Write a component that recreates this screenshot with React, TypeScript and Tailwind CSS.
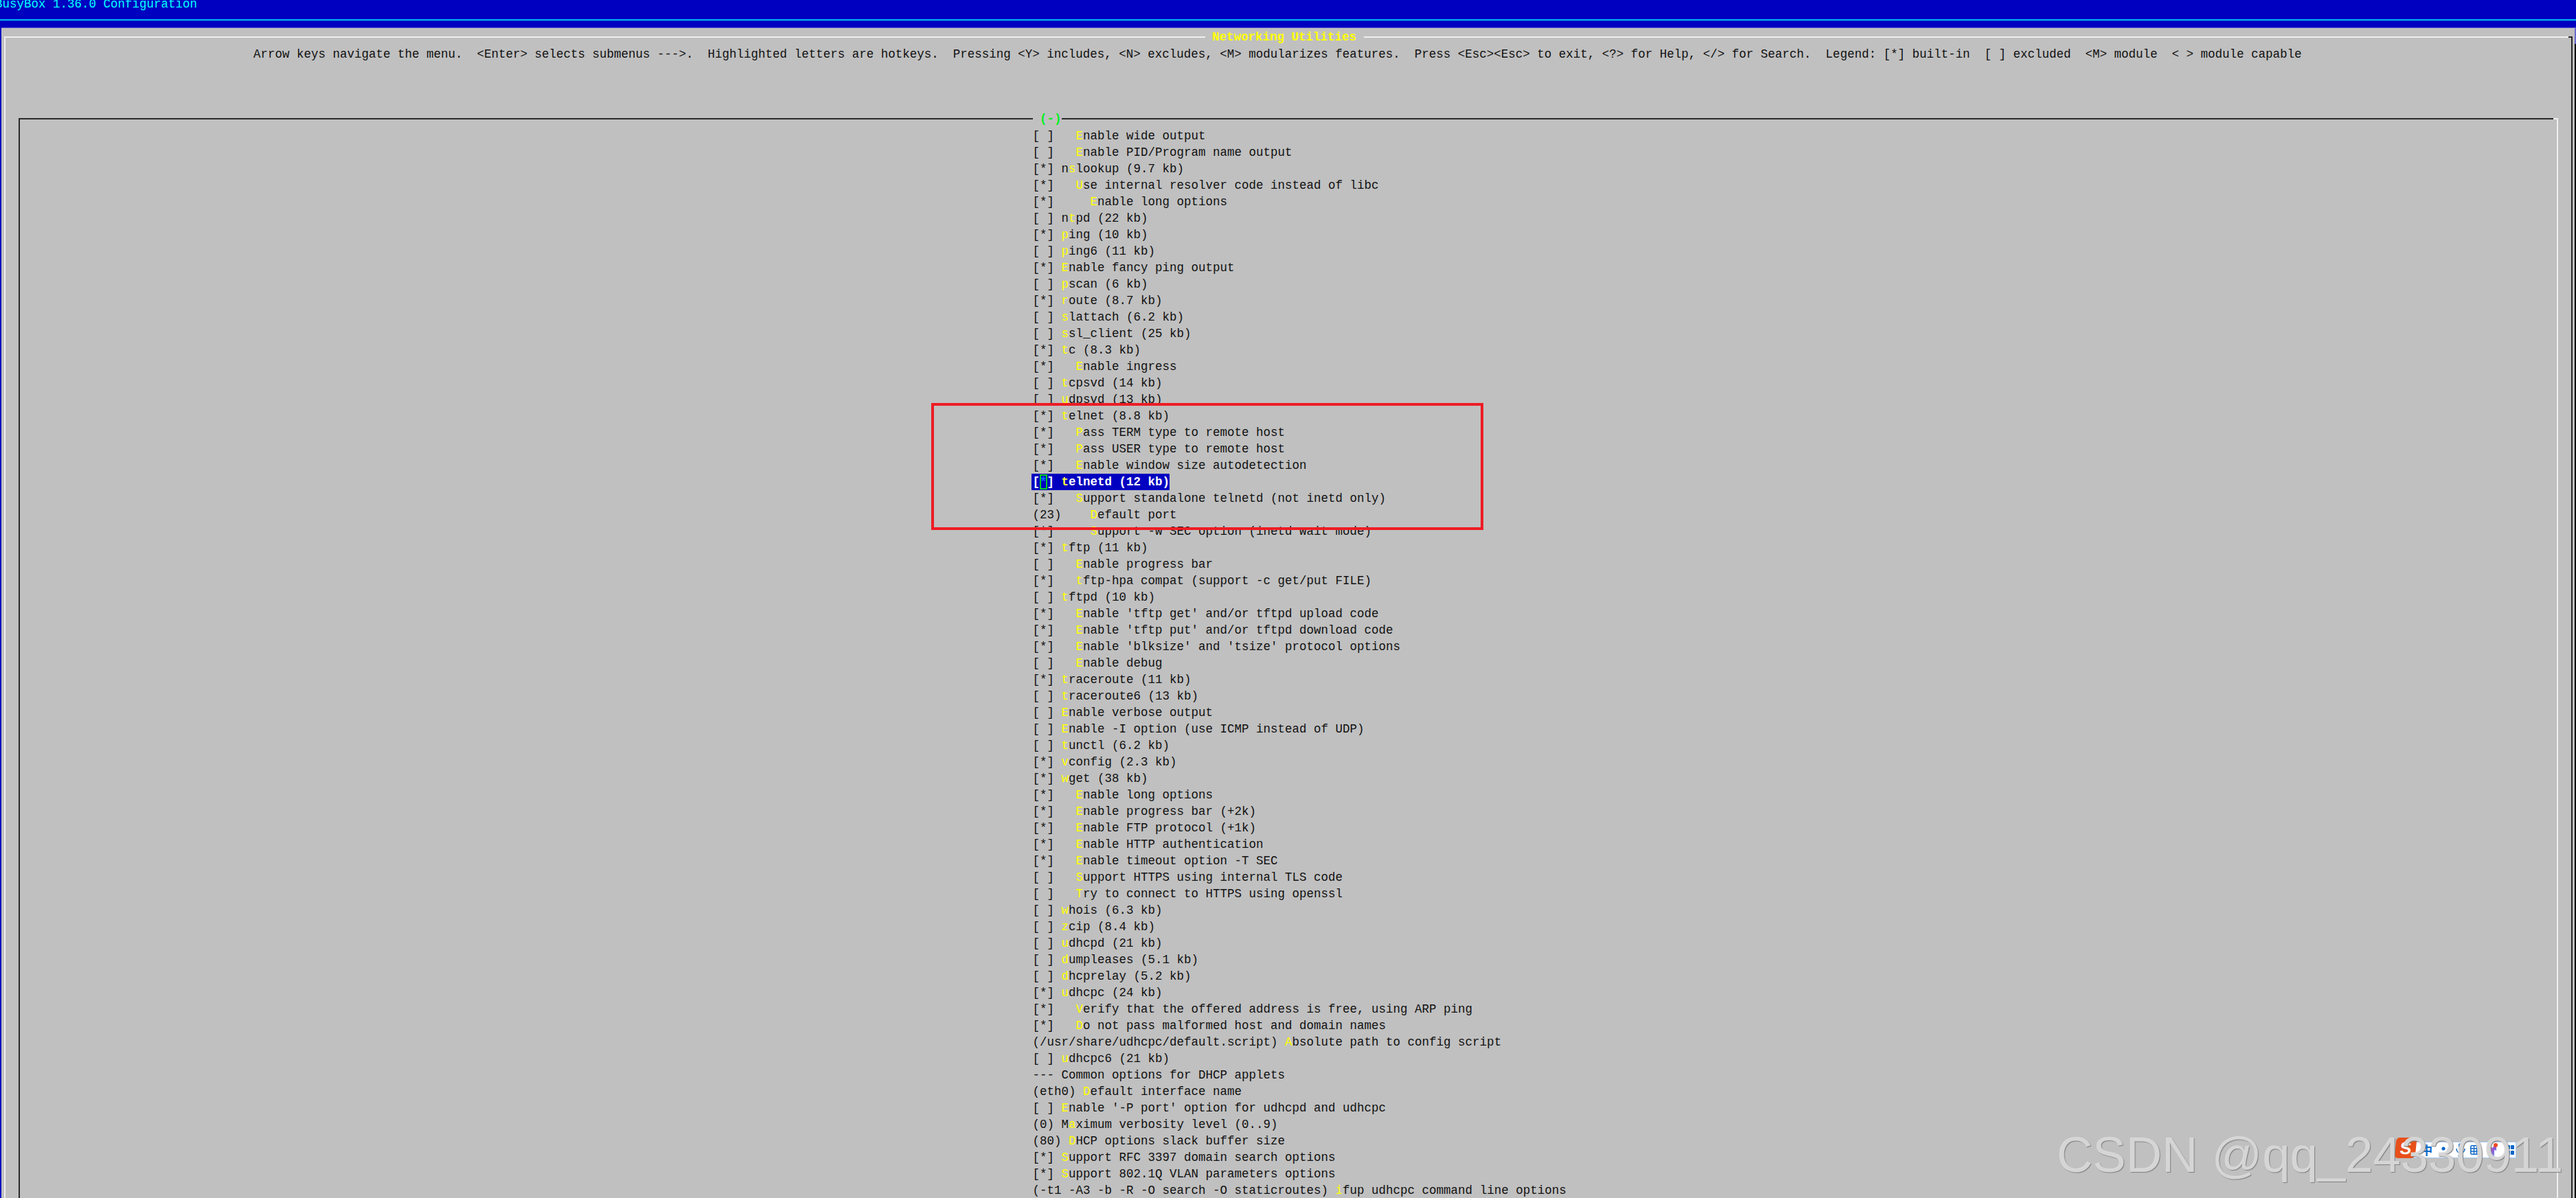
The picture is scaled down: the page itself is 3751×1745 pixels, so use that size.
import React from "react";

const ROWS = [
  "[ ]   ~Enable wide output",
  "[ ]   ~Enable PID/Program name output",
  "[*] n~slookup (9.7 kb)",
  "[*]   ~Use internal resolver code instead of libc",
  "[*]     ~Enable long options",
  "[ ] n~tpd (22 kb)",
  "[*] ~ping (10 kb)",
  "[ ] ~ping6 (11 kb)",
  "[*] ~Enable fancy ping output",
  "[ ] ~pscan (6 kb)",
  "[*] ~route (8.7 kb)",
  "[ ] ~slattach (6.2 kb)",
  "[ ] ~ssl_client (25 kb)",
  "[*] ~tc (8.3 kb)",
  "[*]   ~Enable ingress",
  "[ ] ~tcpsvd (14 kb)",
  "[ ] ~udpsvd (13 kb)",
  "[*] ~telnet (8.8 kb)",
  "[*]   ~Pass TERM type to remote host",
  "[*]   ~Pass USER type to remote host",
  "[*]   ~Enable window size autodetection",
  "@telnetd",
  "[*]   ~Support standalone telnetd (not inetd only)",
  "(23)    ~Default port",
  "[*]     ~Support -w SEC option (inetd wait mode)",
  "[*] ~tftp (11 kb)",
  "[ ]   ~Enable progress bar",
  "[*]   ~tftp-hpa compat (support -c get/put FILE)",
  "[ ] ~tftpd (10 kb)",
  "[*]   ~Enable 'tftp get' and/or tftpd upload code",
  "[*]   ~Enable 'tftp put' and/or tftpd download code",
  "[*]   ~Enable 'blksize' and 'tsize' protocol options",
  "[ ]   ~Enable debug",
  "[*] ~traceroute (11 kb)",
  "[ ] ~traceroute6 (13 kb)",
  "[ ] ~Enable verbose output",
  "[ ] ~Enable -I option (use ICMP instead of UDP)",
  "[ ] ~tunctl (6.2 kb)",
  "[*] ~vconfig (2.3 kb)",
  "[*] ~wget (38 kb)",
  "[*]   ~Enable long options",
  "[*]   ~Enable progress bar (+2k)",
  "[*]   ~Enable FTP protocol (+1k)",
  "[*]   ~Enable HTTP authentication",
  "[*]   ~Enable timeout option -T SEC",
  "[ ]   ~Support HTTPS using internal TLS code",
  "[ ]   ~Try to connect to HTTPS using openssl",
  "[ ] ~whois (6.3 kb)",
  "[ ] ~zcip (8.4 kb)",
  "[ ] ~udhcpd (21 kb)",
  "[ ] ~dumpleases (5.1 kb)",
  "[ ] ~dhcprelay (5.2 kb)",
  "[*] ~udhcpc (24 kb)",
  "[*]   ~Verify that the offered address is free, using ARP ping",
  "[*]   ~Do not pass malformed host and domain names",
  "(/usr/share/udhcpc/default.script) ~Absolute path to config script",
  "[ ] ~udhcpc6 (21 kb)",
  "--- Common options for DHCP applets",
  "(eth0) ~Default interface name",
  "[ ] ~Enable '-P port' option for udhcpd and udhcpc",
  "(0) M~aximum verbosity level (0..9)",
  "(80) ~DHCP options slack buffer size",
  "[*] ~Support RFC 3397 domain search options",
  "[*] ~Support 802.1Q VLAN parameters options",
  "(-t1 -A3 -b -R -O search -O staticroutes) ~ifup udhcpc command line options",
];

const HELP =
  "Arrow keys navigate the menu.  <Enter> selects submenus --->.  Highlighted letters are hotkeys.  Pressing <Y> includes, <N> excludes, <M> modularizes features.  Press <Esc><Esc> to exit, <?> for Help, </> for Search.  Legend: [*] built-in  [ ] excluded  <M> module  < > module capable";

function Row({ text }: { text: string }) {
  if (text.startsWith("@")) {
    return (
      <div className="h-[24px] w-fit -ml-[1.5px] pl-[1.5px] bg-[#0000c0] text-white font-bold">
        [<span className="inline-block h-[22px] leading-[22px] align-top mt-[1px] bg-[#0000c0] text-[#0070ff] ring-2 ring-inset ring-[#00d020]">*</span>]{" "}
        <span className="text-[#ffff40]">t</span>elnetd (12 kb)
      </div>
    );
  }
  const i = text.indexOf("~");
  if (i < 0) return <div className="h-[24px]">{text}</div>;
  return (
    <div className="h-[24px]">
      {text.slice(0, i)}
      <span className="text-[#ffff00]">{text[i + 1]}</span>
      {text.slice(i + 2)}
    </div>
  );
}

function SogouBar() {
  return (
    <div className="absolute left-[3488px] top-[1657px] w-[176px] h-[30px]">
      <div className="absolute left-[25px] top-[6px] w-[151px] h-[24px] bg-white border border-[#a8c8f0] flex items-center text-[#0a66c8]">
        <span className="ml-[11px] w-[16px] text-[17px] leading-[22px] font-bold font-['Noto_Sans_CJK_SC',sans-serif]">中</span>
        <svg className="ml-[11px]" width="16" height="16" viewBox="0 0 16 16">
          <circle cx="6" cy="6" r="2.6" fill="#0a66c8" />
          <path d="M13 3 C15 9 11 13 7 14 C10 11 12 8 13 3Z" fill="#0a66c8" opacity="0.45" />
        </svg>
        <svg className="ml-[7px]" width="16" height="22" viewBox="0 0 16 22" fill="none">
          <rect x="5" y="1" width="6" height="12" rx="3" fill="#0a66c8" />
          <path d="M2 9c0 4 2.5 6.5 6 6.5s6-2.500 6-6.500M8 16v3M4 20h8" stroke="#0a66c8" strokeWidth="1.500" />
        </svg>
        <svg className="ml-[6px]" width="15" height="14" viewBox="0 0 15 14" fill="none">
          <rect x="0.750" y="0.750" width="13.500" height="12.500" rx="1.500" stroke="#0a66c8" strokeWidth="1.500" />
          <path d="M1 5h13M1 9h13M5.500 1v12M9.500 1v12" stroke="#0a66c8" strokeWidth="1.300" />
        </svg>
        <svg className="ml-[9px]" width="17" height="20" viewBox="0 0 17 20">
          <defs>
            <linearGradient id="shirt" x1="0" y1="0" x2="1" y2="1">
              <stop offset="0" stopColor="#c04a9a" />
              <stop offset="0.600" stopColor="#8a60e0" />
              <stop offset="1" stopColor="#60b0ff" />
            </linearGradient>
          </defs>
          <path d="M1 5l4-1 3 3 3-3 3 1v6l-3-1v9H5v-9l-4 1z" fill="url(#shirt)" />
          <circle cx="13" cy="3" r="3" fill="#f04a20" />
        </svg>
        <svg className="ml-[12px]" width="11" height="16" viewBox="0 0 11 16">
          <rect x="0" y="1" width="5" height="6" rx="1" fill="#0a66c8" />
          <rect x="6" y="1" width="5" height="6" rx="1" fill="#0a66c8" />
          <rect x="0" y="9" width="5" height="6" rx="1" fill="#0a66c8" />
          <rect x="6" y="9" width="5" height="6" rx="1" fill="#0a66c8" />
        </svg>
      </div>
      <div className="absolute left-0 top-0 w-[30px] h-[30px] rounded-[5px] bg-[#e8501a] -skew-x-6 flex items-center justify-center text-white text-[25px] leading-[30px] font-bold font-['Liberation_Sans',sans-serif]">
        S
      </div>
    </div>
  );
}

export default function App() {
  return (
    <div className="relative w-[3751px] h-[1745px] overflow-hidden bg-[#0000c0] flex flex-col text-[17.5px] leading-[24px] text-[#111111] whitespace-pre font-['Liberation_Mono',monospace]">
      <header className="h-[40px] shrink-0">
        <div className="h-[18px] -mt-[6px] -ml-[7px] text-[#00ffff]">BusyBox 1.36.0 Configuration</div>
        <div className="mt-[16px] h-[2px] bg-[#00b8f4]" />
      </header>

      <div className="flex-1 min-h-0 flex pl-[2px]">
        <main className="flex-1 min-w-0 bg-[#c0c0c0] border-t border-[#6060c8] pt-[12px] pl-[4px] pr-[3px] flex flex-col">
          <section className="relative flex-1 min-h-0 border-t-2 border-l-2 border-r-2 border-t-[#efefef] border-l-[#efefef] border-r-[#2a2a2a] flex flex-col">
            <div className="absolute -top-[2px] -right-[2px] w-[6px] h-[2px] bg-[#2a2a2a]" />
            <div className="absolute -top-[13px] left-[1746.5px] h-[24px] bg-[#c0c0c0] text-[#ffff00] font-bold"> Networking Utilities </div>

            <p className="mt-[12px] ml-[361px] h-[24px]">{HELP}</p>

            <div className="relative flex-1 min-h-0 mt-[81px] mx-[19px] pt-[12px] pl-[1474.5px] border-t-2 border-l-2 border-r-2 border-t-[#2a2a2a] border-l-[#2a2a2a] border-r-[#efefef]">
              <div className="absolute -top-[2px] -right-[2px] w-[7px] h-[2px] bg-[#efefef]" />
              <div className="absolute -top-[13px] left-[1474.5px] h-[24px] bg-[#c0c0c0] text-[#00f020] font-bold"> (-)</div>
              {ROWS.map((r, i) => (
                <Row key={i} text={r} />
              ))}
            </div>
          </section>
        </main>
        <div className="w-[2px] shrink-0 flex flex-col">
          <div className="h-[24px] bg-[#6a6ad0]" />
          <div className="flex-1 bg-black" />
        </div>
      </div>

      {/* annotation drawn over the screenshot */}
      <div className="absolute left-[1356px] top-[587px] w-[804px] h-[185px] border-4 border-[#ed1c24]" />

      <SogouBar />

      <div className="absolute left-[2995px] top-[1640px] text-[72.5px] leading-[84px] text-[#dedede]/90 [text-shadow:1px_1px_1px_#808080] font-['Liberation_Sans',sans-serif]">
        CSDN @qq_24330911
      </div>
    </div>
  );
}
